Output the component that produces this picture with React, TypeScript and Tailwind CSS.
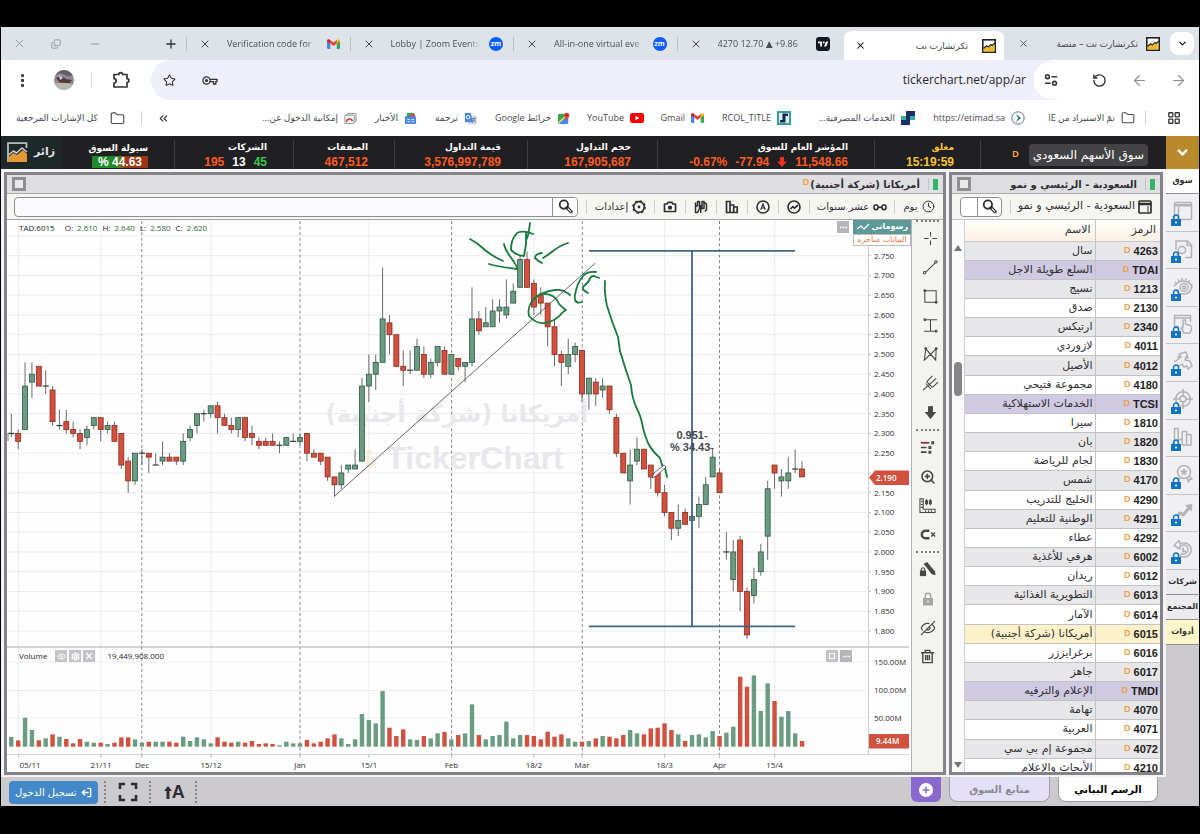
import React from 'react';
import {
  X, Minus, Copy, Plus, ChevronDown, ChevronsLeft, EllipsisVertical, Star, ArrowLeft, ArrowRight,
  RotateCcw, Folder, LayoutGrid, Settings, Clock, EyeOff, ZoomIn, Ellipsis, ArrowDown, LogOut, Eye,
} from 'lucide-react';

type Kids = { children?: React.ReactNode };

/* ---------- market data: open, high, low, close (in halalas) and volume (in 0.59M units) ---------- */

const SERIES: number[][] = [
  [230, 235, 229, 230, 29], [230, 231, 226, 228, 19], [231, 248, 231, 242, 87], [243, 248, 239, 245, 50],
  [247, 247, 242, 242, 19], [242, 246, 240, 242, 25], [241, 242, 232, 233, 37], [232, 236, 231, 232, 30],
  [233, 236, 230, 231, 23], [231, 233, 229, 230, 10], [230, 231, 226, 228, 23], [229, 232, 227, 231, 15],
  [232, 234, 231, 234, 12], [234, 234, 228, 231, 12], [231, 233, 230, 232, 8], [232, 233, 228, 228, 12],
  [230, 230, 221, 222, 28], [223, 224, 215, 218, 28], [218, 225, 217, 225, 22], [225, 226, 222, 225, 12],
  [225, 225, 220, 224, 15], [222, 225, 222, 222, 15], [223, 228, 222, 224, 15], [224, 225, 223, 223, 15],
  [224, 224, 222, 223, 12], [223, 230, 222, 228, 30], [229, 232, 228, 231, 17], [232, 235, 230, 235, 28],
  [235, 236, 233, 235, 22], [235, 237, 234, 237, 10], [237, 238, 230, 234, 28], [234, 235, 232, 232, 15],
  [232, 234, 230, 231, 12], [231, 234, 229, 234, 15], [234, 234, 228, 229, 12], [230, 232, 227, 229, 17],
  [228, 229, 226, 227, 8], [228, 229, 227, 227, 10], [228, 230, 227, 227, 8], [227, 228, 225, 227, 4],
  [227, 229, 227, 229, 15], [228, 230, 228, 228, 10], [228, 230, 227, 229, 10], [230, 230, 223, 225, 20],
  [225, 226, 224, 224, 10], [225, 225, 222, 223, 15], [224, 224, 218, 219, 25], [219, 219, 214, 217, 37],
  [217, 222, 216, 220, 25], [221, 222, 220, 222, 8], [221, 226, 221, 222, 22], [223, 244, 223, 242, 98],
  [242, 250, 238, 245, 80], [245, 250, 241, 248, 70], [248, 272, 248, 259, 167], [258, 260, 250, 255, 57],
  [255, 255, 247, 247, 32], [247, 251, 242, 246, 52], [246, 251, 245, 246, 22], [246, 254, 246, 252, 20],
  [250, 252, 244, 245, 32], [245, 249, 244, 248, 25], [248, 252, 247, 252, 40], [251, 252, 245, 245, 44],
  [245, 250, 245, 250, 22], [249, 249, 246, 247, 35], [247, 248, 243, 248, 40], [248, 267, 247, 259, 127],
  [259, 261, 255, 256, 35], [257, 262, 257, 258, 22], [257, 264, 257, 261, 32], [261, 264, 258, 262, 35],
  [260, 269, 259, 262, 75], [263, 268, 263, 266, 25], [267, 275, 267, 274, 35], [274, 276, 267, 267, 35],
  [268, 269, 260, 262, 32], [265, 267, 260, 263, 22], [263, 263, 252, 257, 45], [257, 259, 247, 250, 30],
  [250, 251, 242, 248, 37], [247, 254, 245, 250, 25], [250, 253, 248, 252, 15], [251, 251, 238, 240, 15],
  [240, 244, 236, 244, 17], [243, 244, 237, 240, 25], [241, 244, 239, 242, 32], [242, 242, 235, 236, 30],
  [234, 235, 224, 225, 25], [225, 225, 220, 220, 35], [218, 226, 212, 222, 50], [223, 229, 222, 226, 40],
  [226, 226, 221, 221, 37], [222, 222, 216, 219, 55], [220, 220, 214, 215, 57], [215, 217, 209, 210, 70],
  [210, 210, 203, 206, 50], [206, 212, 204, 208, 37], [210, 211, 207, 207, 17], [208, 209, 208, 209, 35],
  [209, 214, 206, 212, 37], [212, 219, 212, 217, 28], [219, 226, 219, 224, 47], [220, 221, 215, 215, 32],
  [200, 205, 198, 200, 42], [193, 203, 190, 200, 60], [203, 204, 185, 190, 210], [190, 191, 178, 179, 180],
  [189, 196, 187, 193, 214], [195, 202, 194, 200, 107], [204, 218, 198, 216, 190], [222, 222, 216, 220, 137],
  [218, 221, 214, 219, 90], [218, 224, 216, 220, 107], [221, 226, 220, 221, 40], [221, 223, 219, 219, 17],
];

const X0 = 11.3;
const STEP = 6.876;
const priceY = (p: number) => 255.7 + (275 - p) * 3.95;

const SOLID = [18.7, 101, 211, 369, 534, 664.7, 774.7];
const DASHED = [141.8, 300, 451.6, 582.3, 719.5];
const DATES: [number, string][] = [
  [30, '05/11'], [101, '21/11'], [142, 'Dec'], [211, '15/12'], [300, 'Jan'], [369, '15/1'], [451.5, 'Feb'],
  [534, '18/2'], [582, 'Mar'], [664.5, '18/3'], [719.5, 'Apr'], [774.5, '15/4'],
];
const PRICES = Array.from({ length: 20 }, (_, i) => 275 - i * 5);

const STROKES = [
  'M470 239 Q478 243 485 250 Q492 256 503 261',
  'M489 264 Q500 267 517 269 Q518 268 512 259 Q505 250 504 244',
  'M533 234 C527 231 520 231 517 233 C512 239 511 243 511 250 C515 254 519 256 524 256 L526 244 L526 233 M526 240 C529 236 529 229 530 223',
  'M568 243 Q561 245 553 251 Q548 255 543 258 M542 253 Q535 254 535 258 Q538 261 542 263',
  'M570 295 Q563 289 555 290 Q540 292 533 300 Q527 307 529 316 Q536 324 545 323 Q556 321 563 312 L566 310 Q559 305 558 302 Q554 293 541 294',
  'M596 272 Q588 271 584 275 Q578 282 577 287 Q574 296 575 300 Q577 304 582 302',
  'M599 278 L594 276 Q590 276 589 281 L583 287 Q582 290 588 293',
  'M605 281 Q604 292 607 306 Q612 322 618 337 L620 351 Q625 368 631 385 Q632 399 637 409 Q641 416 643 428 Q645 436 648 443 Q652 451 660 458 L662 465 L665 468 L667 477',
];

function PriceChart() {
  return (
    <svg viewBox="7 220 904 552" preserveAspectRatio="xMinYMin meet" className="block h-full w-full" role="img" aria-label="TAD.6015">
      <rect x="7" y="220" width="904" height="552" fill="#fefefe" />
      <g stroke="#ebebee" strokeWidth="1">
        {[280, ...PRICES].map((p) => <line key={p} x1="7" x2="867" y1={priceY(p)} y2={priceY(p)} />)}
        {[662, 690.5, 718].map((y) => <line key={y} x1="7" x2="867" y1={y} y2={y} />)}
        {SOLID.map((x) => <line key={x} x1={x} x2={x} y1="220" y2="757" />)}
      </g>
      <g stroke="#85838a" strokeWidth="1" strokeDasharray="3 2.6">
        {DASHED.map((x) => <line key={x} x1={x} x2={x} y1="221" y2="757" />)}
      </g>
      <g fill="#e9e7ec" fontWeight="700" textAnchor="middle">
        <text x="457" y="422" fontSize="24" direction="rtl" fontFamily="'DejaVu Sans', sans-serif">أمريكانا (شركة أجنبية)</text>
        <text x="475" y="469" fontSize="32" fontFamily="'Liberation Sans', sans-serif">TickerChart</text>
      </g>
      <path d="M368 466 V452 H373 M368 468 L376 461" fill="none" stroke="#f6e9da" strokeWidth="3" />
      <line x1="8" x2="8" y1="433" y2="441" stroke="#777" />
      {SERIES.map(([o, h, l, c, v], i) => {
        const x = X0 + i * STEP;
        const up = c >= o;
        const fill = up ? '#699c80' : '#d2503e';
        return (
          <g key={i}>
            <line x1={x} x2={x} y1={priceY(h)} y2={priceY(l)} stroke="#6b6b6e" strokeWidth="1" />
            {o === c
              ? <line x1={x - 3} x2={x + 3} y1={priceY(o)} y2={priceY(o)} stroke="#2d3b35" strokeWidth="1.2" />
              : <rect x={x - 2.5} y={priceY(Math.max(o, c))} width="5" height={Math.abs(o - c) * 3.95} fill={fill} stroke={up ? '#2f5743' : '#8a2a1e'} strokeWidth="0.8" />}
            <rect x={x - 2.2} y={746.7 - v / 3} width="4.4" height={v / 3} fill={fill} />
          </g>
        );
      })}
      <line x1="334.3" y1="496.3" x2="595.3" y2="263" stroke="#555" strokeWidth="0.9" />
      <g stroke="#40658c" strokeWidth="1.8">
        <path d="M589 250.8 H795 M589 626.3 H795 M692 251 V626" />
      </g>
      <g fontFamily="'Liberation Sans', sans-serif" fontWeight="700" fontSize="11" fill="#48464c" textAnchor="middle">
        <text x="692" y="439">0.951-</text>
        <text x="692" y="451">% 34.43-</text>
      </g>
      <g fill="none" stroke="#187a3c" strokeWidth="1.8" strokeLinecap="round" strokeLinejoin="round">
        {STROKES.map((d) => <path key={d} d={d} />)}
      </g>
      <path d="M652 478 L654 473 L664 465 L666 467 L656 476 Z" fill="#fff" stroke="#444" strokeWidth="0.8" />
      <g stroke="#c3c1c6" strokeWidth="1">
        <line x1="7" x2="909" y1="647" y2="647" stroke="#a7a6aa" strokeWidth="1.2" />
        <line x1="7" x2="909" y1="754.5" y2="754.5" stroke="#d5d3d8" />
        <line x1="868.5" x2="868.5" y1="220" y2="754" stroke="#cfcbd3" />
        {PRICES.map((p) => <line key={p} x1="868" x2="871" y1={priceY(p)} y2={priceY(p)} />)}
        {[...SOLID, ...DASHED].map((x) => <line key={x} x1={x} x2={x} y1="754" y2="758" />)}
      </g>
      <g fontFamily="'Open Sans', sans-serif" fontSize="8" fill="#2f2d33">
        {PRICES.filter((p) => p !== 220).map((p) => <text key={p} x="874" y={priceY(p) + 3}>{(p / 100).toFixed(3)}</text>)}
        <text x="874" y="664.5">150.00M</text>
        <text x="874" y="693">100.00M</text>
        <text x="874" y="720.5">50.00M</text>
        <g textAnchor="middle">{DATES.map(([x, d]) => <text key={d} x={x} y="767.5">{d}</text>)}</g>
      </g>
      <path d="M869 477.5 L875 470.5 H909 V485 H875 Z" fill="#d2513e" />
      <rect x="869" y="734" width="40" height="14.5" fill="#d2513e" />
      <g fontFamily="'Open Sans', sans-serif" fontSize="8" fontWeight="600" fill="#fff">
        <text x="876" y="480.5">2.190</text>
        <text x="876" y="744">9.44M</text>
      </g>
    </svg>
  );
}

/* ---------- brand marks ---------- */

const Gmail = () => (
  <svg viewBox="0 0 24 18" className="h-[10px] w-[13px] shrink-0"><path d="M0 3v13a2 2 0 0 0 2 2h4V8z" fill="#4285f4" /><path d="M24 3v13a2 2 0 0 1-2 2h-4V8z" fill="#34a853" /><path d="M18 1.500v6.500l6-4.500V3c0-3-3-3.500-4.500-2.300z" fill="#fbbc04" /><path d="M6 8V1.600l6 4.500 6-4.500V8l-6 4.500z" fill="#ea4335" /><path d="M0 3v1l6 4.500V1.600L4.500.7C3-.5 0 0 0 3z" fill="#c5221f" /></svg>
);
const ZoomMark = () => <span className="flex size-[14px] shrink-0 items-center justify-center rounded-full bg-[#0b5cff] font-['Open_Sans',sans-serif] text-[7px] leading-none font-bold text-white">zm</span>;
const TvMark = () => (
  <svg viewBox="0 0 14 14" className="size-[14px] shrink-0"><rect width="14" height="14" rx="3" fill="#131722" /><path d="M2 4.500h4v5H4.200V6.300H2zM10 4.500h2.300l-2 5H8z" fill="#fff" /><circle cx="7.700" cy="5.400" r="1" fill="#fff" /></svg>
);
const TcMark = () => (
  <svg viewBox="0 0 14 14" className="size-[14px] shrink-0"><rect x=".8" y=".8" width="12.400" height="12.400" fill="#fff" stroke="#222" strokeWidth="1.600" /><path d="M1.500 12.500V10l3-2.500 1.800 1.500L9 6.500l1.500 1 2-2v7z" fill="#f5b923" /><path d="M1.500 9.500l3-2.700L6.300 8 9 5.500l1.200 1L13 4" fill="none" stroke="#222" strokeWidth="1.200" /></svg>
);
const YouTube = () => <svg viewBox="0 0 14 10" className="h-[10px] w-[14px] shrink-0"><rect width="14" height="10" rx="2.500" fill="#f00" /><path d="M5.500 2.800v4.400L9.400 5z" fill="#fff" /></svg>;
const Maps = () => <svg viewBox="0 0 14 14" className="size-[13px] shrink-0"><rect x="1" y="2" width="11" height="11" rx="1.500" fill="#34a853" /><path d="M1 13L12 3v8a2 2 0 0 1-2 2z" fill="#4285f4" /><path d="M2 13L12 3l-1-1L1 11z" fill="#fbd75b" /><path d="M10.500 9C9 6.500 7.700 5.500 7.700 3.500a2.800 2.800 0 0 1 5.600 0c0 2-1.300 3-2.800 5.500z" fill="#ea4335" /><circle cx="10.500" cy="3.400" r="1" fill="#811" /></svg>;
const Translate = () => <svg viewBox="0 0 14 14" className="size-[13px] shrink-0"><rect x="5" y="4" width="8.500" height="9.500" rx="1" fill="#cfd3da" /><path d="M1 1h6l3 10H1z" fill="#4a86e8" /><circle cx="4.500" cy="5.500" r="1.900" fill="none" stroke="#fff" /><path d="M9 7h4M11 6v1q0 3-2 4M10 8l3 3" stroke="#667" strokeWidth=".8" fill="none" /></svg>;
const News = () => <svg viewBox="0 0 14 14" className="size-[13px] shrink-0"><path d="M3 1h8v5H3z" fill="#34a853" /><path d="M7 2l5 1v4H6z" fill="#ea4335" /><rect x="1" y="4.500" width="12" height="8.500" rx="1" fill="#4a86e8" /><path d="M3.500 8h3M3.500 10.500h3M8 8h3M8 10.500h3" stroke="#fff" strokeWidth=".9" /></svg>;
const Remote = () => <svg viewBox="0 0 14 14" className="size-[13px] shrink-0"><rect x="3" y="1.500" width="10" height="9" rx="1" fill="#eee" stroke="#888" /><rect x="1" y="3.500" width="10" height="9" rx="1" fill="#fafafa" stroke="#888" /><path d="M3 11a3 3 0 0 1 6-1" fill="none" stroke="#d33" strokeWidth="1.600" /></svg>;
const Rcol = () => <svg viewBox="0 0 14 14" className="size-[14px] shrink-0"><rect width="14" height="14" fill="#35a097" /><path d="M2 2h10v10H2z" fill="#d9efeb" /><path d="M5.500 2.500H11V5H8.500v6.500H3V9h2.500z" fill="#18205e" /></svg>;
const Bank = () => <svg viewBox="0 0 14 14" className="size-[14px] shrink-0"><path d="M5 0h9v5H9v9H0V9h5z" fill="#1c2c6d" /><path d="M0 5h5v4H0zM9 5h5v4H9z" fill="#35b09f" /></svg>;
const Etimad = () => <svg viewBox="0 0 14 14" className="size-[14px] shrink-0"><circle cx="7" cy="7" r="6.200" fill="#fff" stroke="#566" strokeWidth=".9" /><path d="M5 3l5 4-5 4 2-4z" fill="#1d7f78" /></svg>;

const Loupe = () => (
  <svg viewBox="0 0 14 14" className="size-[15px]" fill="none" stroke="currentColor"><circle cx="5.500" cy="5.200" r="3.900" strokeWidth="1.700" /><path d="M8.500 8.200l3.600 3.600" strokeWidth="3.200" strokeLinecap="round" /><path d="M9.500 9.200l2.400 2.400" stroke="#fff" strokeWidth="1" strokeLinecap="round" /></svg>
);

/* ---------- browser chrome ---------- */

function Tab({ title, icon }: { title: string; icon: React.ReactNode }) {
  return (
    <div className="flex h-full min-w-0 flex-1 items-center">
      <span className="h-3.5 w-px bg-[#b9bfc8]" />
      <button aria-label="إغلاق" className="ml-3 shrink-0 text-[#333]"><X size={12} strokeWidth={1.8} /></button>
      <button dir="ltr" className="ml-4 flex-1 overflow-hidden mask-r-from-85% text-left whitespace-nowrap text-[#4b4e55]">{title}</button>
      <span className="mr-[10px] ml-2">{icon}</span>
    </div>
  );
}

function Bookmark({ icon, children, className }: Kids & { icon: React.ReactNode; className: string }) {
  return (
    <a href="#bookmark" className={`flex shrink-0 items-center justify-end gap-1.5 whitespace-nowrap ${className}`}>
      <span dir="auto">{children}</span>
      {icon}
    </a>
  );
}

function BrowserChrome() {
  return (
    <header className="font-['Open_Sans','DejaVu_Sans',sans-serif] text-[9px] text-[#45484f]">
      <div className="flex h-[33px] items-center bg-[#dee3ea]">
        <div className="flex w-[185px] shrink-0 items-center text-[#8d9096]">
          <button aria-label="إغلاق النافذة" className="ml-3 w-[38px]"><X size={13} strokeWidth={1.6} /></button>
          <button aria-label="استعادة" className="w-[38px]"><Copy size={10} strokeWidth={2} className="-scale-y-100" /></button>
          <button aria-label="تصغير" className="w-[75px]"><Minus size={12} strokeWidth={1.8} /></button>
          <button aria-label="علامة تبويب جديدة" className="text-[#333]"><Plus size={14} strokeWidth={2.200} /></button>
        </div>
        <div className="mr-1 flex h-full min-w-0 flex-1">
          <Tab title="Verification code for" icon={<Gmail />} />
          <Tab title="Lobby | Zoom Events" icon={<ZoomMark />} />
          <Tab title="All-in-one virtual eve" icon={<ZoomMark />} />
          <Tab title="4270 12.70 ▲ +9.86" icon={<TvMark />} />
        </div>
        <div className="mt-1 flex h-[29px] w-[160px] shrink-0 items-center rounded-t-lg bg-white pr-2 pl-[11px]">
          <button aria-label="إغلاق" className="text-black"><X size={11} strokeWidth={2.200} /></button>
          <button dir="rtl" className="mx-3.5 flex-1 text-start whitespace-nowrap">تكرتشارت نت</button>
          <TcMark />
        </div>
        <div className="flex w-[166px] shrink-0 items-center pr-[10px] pl-[14px]">
          <button aria-label="إغلاق"><X size={11} strokeWidth={1.800} /></button>
          <button dir="rtl" className="mx-2 flex-1 overflow-hidden text-start whitespace-nowrap">تكرتشارت نت – منصة</button>
          <TcMark />
        </div>
        <button aria-label="البحث في علامات التبويب" className="mr-[5px] flex h-[23px] w-6 shrink-0 items-center justify-center rounded-lg bg-white text-black"><ChevronDown size={11} strokeWidth={2.400} /></button>
      </div>

      <div className="flex h-10 items-center bg-white text-[#333]">
        <button aria-label="القائمة" className="ml-[13px]"><EllipsisVertical size={17} strokeWidth={2.600} /></button>
        <svg viewBox="0 0 20 20" className="ml-[23px] size-5"><defs><clipPath id="avatar"><circle cx="10" cy="10" r="10" /></clipPath></defs><g clipPath="url(#avatar)"><rect width="20" height="20" fill="#8e8c96" /><path d="M0 5Q6 2 11 5T20 4V0H0z" fill="#6a5c6b" /><path d="M2 8Q8 5 12 9L18 10 16 13 6 13z" fill="#583640" /><path d="M0 14Q10 11 20 15V20H0z" fill="#b9b7ab" /><path d="M5 5l4 3-3 2z" fill="#d9d4da" /></g></svg>
        <span className="ml-[17px] h-3.5 w-px bg-[#c9cfee]" />
        <button aria-label="الإضافات" className="ml-5">
          <svg viewBox="0 0 18 18" className="size-[18px]" fill="none" stroke="currentColor" strokeWidth="1.700" strokeLinejoin="round"><path d="M2 3.500h4.800a1.900 1.900 0 0 1 3.800 0H15v4.200a1.900 1.900 0 0 1 0 3.800V16H2v-4a2.200 2.200 0 0 0 0-4.400z" /></svg>
        </button>
        <div className="ml-[21px] flex h-10 min-w-0 flex-1 items-center rounded-full bg-[#efeffb] pl-3">
          <button aria-label="إضافة إشارة"><Star size={13} strokeWidth={1.900} /></button>
          <button aria-label="كلمات المرور" className="ml-[26px]">
            <svg viewBox="0 0 16 9" className="h-[9px] w-4" fill="none" stroke="currentColor" strokeWidth="1.300"><circle cx="4.500" cy="4.500" r="3.600" /><circle cx="4.500" cy="4.500" r=".9" fill="currentColor" /><path d="M8 3.300h7v2.400h-1.200V8h-2.300V5.700H8" /></svg>
          </button>
          <input aria-label="العنوان" defaultValue="tickerchart.net/app/ar" className="ml-3 min-w-0 flex-1 bg-transparent text-right text-[12px] text-[#26262e] outline-none" />
          <button aria-label="معلومات الموقع" className="ml-2 flex h-9 w-[34px] shrink-0 items-center justify-center rounded-2xl bg-white">
            <svg viewBox="0 0 14 14" className="size-3.5" fill="none" stroke="currentColor" strokeWidth="1.600"><circle cx="3.500" cy="3.700" r="1.900" /><path d="M7.500 3.700H13M1 10.300h5.500" /><circle cx="10.500" cy="10.300" r="1.900" /></svg>
          </button>
        </div>
        <button aria-label="إعادة التحميل" className="ml-6"><RotateCcw size={15} strokeWidth={2.200} /></button>
        <button aria-label="رجوع" className="ml-6 text-[#8d8f94]"><ArrowLeft size={17} strokeWidth={1.700} /></button>
        <button aria-label="تقدم" className="mr-3 ml-[22px] text-[#8d8f94]"><ArrowRight size={17} strokeWidth={1.700} /></button>
      </div>

      <nav className="flex h-[36px] items-center bg-white">
        <div className="flex w-[168px] shrink-0 items-center pl-[15px]">
          <a href="#bookmark" className="flex items-center gap-3 whitespace-nowrap"><span dir="rtl">كل الإشارات المرجعية</span><Folder size={15} strokeWidth={1.800} /></a>
          <span className="ml-4 h-3.5 w-px bg-[#c9cfee]" />
        </div>
        <button aria-label="المزيد" className="-ml-3 text-[#333]"><ChevronsLeft size={13} /></button>
        <div className="flex flex-1 justify-end">
          <Bookmark className="w-[110px]" icon={<Remote />}>إمكانية الدخول عن...</Bookmark>
          <Bookmark className="w-[60px]" icon={<News />}>الأخبار</Bookmark>
          <Bookmark className="w-[60px]" icon={<Translate />}>ترجمة</Bookmark>
          <Bookmark className="w-[93px]" icon={<Maps />}>خرائط Google</Bookmark>
          <Bookmark className="w-[74px]" icon={<YouTube />}>YouTube</Bookmark>
          <Bookmark className="w-[60px]" icon={<Gmail />}>Gmail</Bookmark>
          <Bookmark className="w-[87px]" icon={<Rcol />}>RCOL_TITLE</Bookmark>
          <Bookmark className="w-[124px]" icon={<Bank />}>الخدمات المصرفية...</Bookmark>
          <Bookmark className="w-[110px]" icon={<Etimad />}>https://etimad.sa</Bookmark>
          <Bookmark className="w-[110px]" icon={<Folder size={14} strokeWidth={1.800} />}>تمّ الاستيراد من IE</Bookmark>
        </div>
        <span className="ml-2.5 h-3.5 w-px bg-[#c9cfee]" />
        <button aria-label="التطبيقات" className="mr-[18px] ml-[21px] text-[#333]"><LayoutGrid size={14} strokeWidth={2.200} /></button>
      </nav>
    </header>
  );
}

/* ---------- market strip ---------- */

function Stat({ label, children, gold = false }: Kids & { label: string; gold?: boolean }) {
  return (
    <div className="flex flex-col items-end justify-center py-1 pr-[1px] whitespace-nowrap">
      <div className="flex h-full w-full flex-col items-end justify-center gap-px border-r border-[#3f3f42] pr-[26px]">
        <span dir="rtl" className={`font-['DejaVu_Sans',sans-serif] text-[9px] leading-[14px] font-bold ${gold ? 'text-[#fbc32d]' : 'text-white'}`}>{label}</span>
        <span className={`flex items-center gap-2 font-['Liberation_Sans',sans-serif] text-[12px] leading-[14px] font-bold ${gold ? 'text-[#fbc32d]' : 'text-[#ff5a1f]'}`}>{children}</span>
      </div>
    </div>
  );
}

function MarketStrip() {
  return (
    <section className="flex h-[33px] bg-[#202022]">
      <a href="#account" className="flex w-[61px] shrink-0 items-center gap-1.5 bg-[#1e2829] pl-1.5 font-['DejaVu_Sans',sans-serif] text-[11px] font-bold text-[#e4e4e6]">
        <svg viewBox="0 0 21 21" className="size-[21px]"><path d="M1 20V1.200h18.500V6" fill="none" stroke="#b8bcbf" strokeWidth="1.800" /><path d="M1.500 20v-5l5-4 3.500 2 6-5 4 4v8z" fill="#e39a35" /><path d="M1.500 13l5-4 3 2L15 6l5 4" fill="none" stroke="#c9cccf" strokeWidth="1.600" /></svg>
        <span dir="rtl">زائر</span>
      </a>
      <div className="grid min-w-0 flex-1 grid-cols-[114fr_119fr_101fr_133fr_130fr_217fr_106fr_184fr]">
        <Stat label="سيولة السوق"><span className="bg-linear-to-r from-[#1f8a2a] from-45% to-[#9c3510] to-60% px-1.5 leading-[12px] text-white">% 44.63</span></Stat>
        <Stat label="الشركات"><span>195</span><span className="text-white">13</span><span className="text-[#35c84a]">45</span></Stat>
        <Stat label="الصفقات">467,512</Stat>
        <Stat label="قيمة التداول">3,576,997,789</Stat>
        <Stat label="حجم التداول">167,905,687</Stat>
        <Stat label="المؤشر العام للسوق"><span>-0.67%</span><span>-77.94</span><svg viewBox="0 0 10 10" className="size-[10px]"><path d="M3 0h4v4.500h3L5 10 0 4.500h3z" fill="#f02f1d" /></svg><span>11,548.66</span></Stat>
        <Stat label="مغلق" gold>15:19:59</Stat>
        <div className="flex items-center justify-end gap-2.5 pr-[18px]">
          <span className="font-['Liberation_Sans',sans-serif] text-[9px] font-bold text-[#f2a33c]">D</span>
          <button dir="rtl" className="h-[22px] rounded bg-[#434345] px-1 font-['DejaVu_Sans',sans-serif] text-[12px] whitespace-nowrap text-white">سوق الأسهم السعودي</button>
        </div>
      </div>
      <button aria-label="اختيار السوق" className="flex w-[33px] shrink-0 items-center justify-center bg-[#b98a2c] text-white"><ChevronDown size={15} strokeWidth={4} /></button>
    </section>
  );
}

/* ---------- panels ---------- */

function Panel({ title, children, badge, className }: Kids & { title: string; badge?: boolean; className: string }) {
  return (
    <section className={`flex min-h-0 flex-col border-3 border-[#858387] bg-white ${className}`}>
      <div className="flex h-[19px] shrink-0 items-center border-b border-[#aaa8ac] bg-[#dfdee1] px-[5px]">
        <button aria-label="تكبير" className="size-3.5 border-[3px] border-[#8f8e92] bg-[#e9e9ea]" />
        {badge && <span className="ml-auto pb-0.5 font-['Liberation_Sans',sans-serif] text-[9px] font-bold text-[#f2a33c]">D</span>}
        <h2 dir="rtl" className={`pr-2 font-['DejaVu_Sans',sans-serif] text-[10px] font-bold whitespace-nowrap text-[#2f2e33] ${badge ? 'ml-px' : 'ml-auto'}`}>{title}</h2>
        <span className="h-3 w-px bg-[#c5c4c7]" />
        <span className="ml-1 h-[11px] w-[5px] bg-[#35b46c]" />
      </div>
      {children}
    </section>
  );
}

const Sep = () => <span className="h-3.5 w-px shrink-0 bg-[#cfcfcf]" />;

function ToolButton({ label, children }: Kids & { label: string }) {
  return <button aria-label={label} className="flex w-[30px] shrink-0 items-center justify-center">{children}</button>;
}

function ChartToolbar() {
  return (
    <div className="flex h-[26px] shrink-0 items-center border-b border-[#a3a2a6] bg-[#f5f6f2] pl-[7px] font-['DejaVu_Sans',sans-serif] text-[10px] whitespace-nowrap text-[#2f2e33]">
      <form className="flex h-5 min-w-0 flex-1 overflow-hidden rounded border border-[#8f8e92] bg-[#faf9fb]">
        <input aria-label="بحث" className="min-w-0 flex-1 bg-transparent px-2 outline-none" />
        <button type="button" aria-label="ابحث" className="flex w-[25px] items-center justify-center border-l border-[#8f8e92] bg-white"><Loupe /></button>
      </form>
      <span className="w-2" />
      <Sep />
      <button className="flex w-[67px] items-center justify-center gap-1">
        <span>إعدادات</span>
        <svg viewBox="0 0 14 14" className="size-3.5" fill="none" stroke="currentColor"><circle cx="7" cy="7" r="5.300" strokeWidth="1.700" /><circle cx="7" cy="7" r="6.200" strokeWidth="1.300" strokeDasharray="2.400 2.460" /><circle cx="7" cy="7" r="1.400" fill="currentColor" stroke="none" /></svg>
      </button>
      <Sep />
      <ToolButton label="صورة">
        <svg viewBox="0 0 14 12" className="h-3 w-3.5"><path d="M1.500 3h2.700l1-1.700h3.600l1 1.700h2.700v7.500h-11z" fill="#fff" stroke="currentColor" strokeWidth="1.700" strokeLinejoin="round" /><circle cx="7" cy="6.600" r="2.200" fill="currentColor" /></svg>
      </ToolButton>
      <Sep />
      <ToolButton label="نوع الرسم">
        <svg viewBox="0 0 14 14" className="size-3.5" fill="none" stroke="currentColor" strokeWidth="1.500" strokeLinejoin="round"><path d="M1.500 2.500v3M1.500 11v2M3.500 1.500h2v7l-2 4h-2V6h2zM8 1.500h2v7H8zM11 2.500l1.500 2v5l-1.500 2M6.700 5v8" /></svg>
      </ToolButton>
      <Sep />
      <ToolButton label="مؤشرات">
        <svg viewBox="0 0 14 14" className="size-3.5" fill="none" stroke="currentColor" strokeWidth="1.700"><path d="M1.500 1.500h3.500v11H1.500zM5 5h3.700v7.500H5zM8.700 7h3.500v5.500H8.700z" /></svg>
      </ToolButton>
      <Sep />
      <ToolButton label="نص">
        <svg viewBox="0 0 14 14" className="size-3.5" fill="none" stroke="currentColor" strokeWidth="1.600"><circle cx="7" cy="7" r="6" /><path d="M4.800 9.700L7 4l2.200 5.700M5.500 8h3" strokeWidth="1.200" /></svg>
      </ToolButton>
      <Sep />
      <ToolButton label="اتجاه">
        <svg viewBox="0 0 14 14" className="size-3.5" fill="none" stroke="currentColor" strokeWidth="1.700"><circle cx="7" cy="7" r="6" /><path d="M3.500 9l2.300-2.300 1.700 1.500L11 5" /></svg>
      </ToolButton>
      <Sep />
      <button className="flex w-[84px] items-center justify-center gap-1">
        <span dir="rtl">عشر سنوات</span>
        <svg viewBox="0 0 14 8" className="h-2 w-3.5" fill="none" stroke="currentColor" strokeWidth="1.600"><rect x="1" y="2" width="4" height="4.600" rx="1.600" /><rect x="9" y="2" width="4" height="4.600" rx="1.600" /><path d="M5 4.300h4" /></svg>
      </button>
      <Sep />
      <button className="flex w-12 items-center justify-center gap-1"><span>يوم</span><Clock size={13} strokeWidth={1.800} /></button>
    </div>
  );
}

const Small = ({ d, fill = 'none' }: { d: string; fill?: string }) => (
  <svg viewBox="0 0 18 18" className="size-[17px]" fill={fill} stroke="currentColor" strokeWidth="1.100"><path d={d} /></svg>
);
const Dots = () => <span className="my-0.5 w-[23px] border-t-2 border-dotted border-[#7d7d7d] first:mt-0" />;

const TOOLS_A: [string, React.ReactNode][] = [
  ['مؤشر التقاطع', <Small d="M9 2v5M9 11v5M2 9h5M11 9h5" />],
  ['خط', <Small d="M3.500 14.500L14 4M4 14a1.300 1.300 0 1 0-2 1.500a1.300 1.300 0 0 0 2-1.500M16 2.600a1.300 1.300 0 1 0-2 1.500a1.300 1.300 0 0 0 2-1.500" />],
  ['مستطيل', <Small d="M3 3h12v12H3zM2 3a1 1 0 1 0 2 0a1 1 0 1 0-2 0M14 15a1 1 0 1 0 2 0a1 1 0 1 0-2 0" />],
  ['قياس', <Small d="M4 3h12M2 15h12M9 3v12M2 3a1 1 0 1 0 2 0a1 1 0 1 0-2 0M14 15a1 1 0 1 0 2 0a1 1 0 1 0-2 0" />],
  ['نموذج', <Small d="M2.500 15L4 3l10.500 12L15 3zM9 8.700L2.500 15M9 8.700L15 15M3 3a1 1 0 1 0 2 0a1 1 0 1 0-2 0M14 3a1 1 0 1 0 2 0a1 1 0 1 0-2 0" />],
  ['شوكة', <Small d="M1 16L8 10M5 7l6-6M8 10l7-6.500M11 13l6-5.500M5 7l6 6M4 9l5.500 6" />],
  ['سهم', <Small fill="currentColor" d="M7 3h4v6h3l-5 6-5-6h3z" />],
];
const TOOLS_B: [string, React.ReactNode][] = [
  ['قائمة', <svg viewBox="0 0 18 18" className="size-[17px]" stroke="currentColor" strokeWidth="1.800"><path d="M2 4h9" stroke="#8b2942" /><path d="M2 9h6M2 14h6" /><path d="M13 4h3M10 9h3M10 14h3" strokeWidth="3" /></svg>],
  ['تكبير الرسم', <ZoomIn size={16} strokeWidth={2.400} />],
  ['مسطرة', <Small d="M1 2h3.500v11H17v3.500H1zM2 5h2M2 8h2M2 11h2M7 14v2M10 14v2M13 14v2M8 2v7M12 2v7M7 4h2v3H7zM11 4h2v3h-2z" />],
  ['مغناطيس', <svg viewBox="0 0 18 18" className="size-[17px]" fill="none" stroke="currentColor"><path d="M11 5H7a4 4 0 0 0 0 8h4" strokeWidth="2.600" /><path d="M13 7l4 4M17 7l-4 4" strokeWidth="1.500" /></svg>],
];
const TOOLS_C: [string, React.ReactNode][] = [
  ['قفل الرسم', <svg viewBox="0 0 18 18" className="size-[17px]" fill="currentColor"><path d="M5 3l3.500-2L17 11l.5 4-4-1z" /><path d="M1 10h6.500v6H1z" /><path d="M2.500 10V8.500a1.800 1.800 0 0 1 3.500 0V10" fill="none" stroke="currentColor" strokeWidth="1.200" /></svg>],
  ['قفل', <svg viewBox="0 0 12 14" className="h-3.5 w-3 text-[#a5a5a5]"><path d="M3.300 6.500V4a2.700 2.700 0 0 1 5.400 0v2.500" fill="none" stroke="currentColor" strokeWidth="1.500" /><rect x="1" y="6" width="10" height="7.500" fill="currentColor" /><circle cx="6" cy="9.500" r="1" fill="#f3f4ef" /></svg>],
  ['إخفاء', <EyeOff size={16} strokeWidth={1.800} className="-scale-x-100" />],
  ['حذف', <svg viewBox="0 0 16 16" className="size-[15px]" fill="none" stroke="currentColor" strokeWidth="1.500"><path d="M1 4h14M5.500 3.500V1.500h5v2M3 4v10.500h10V4M6 6.500v5.500M8 6.500v5.500M10 6.500v5.500" /></svg>],
];

const toolItem = ([label, icon]: [string, React.ReactNode]) => (
  <button key={label} aria-label={label} className="flex h-[29px] items-center justify-center">{icon}</button>
);

function ChartPanel() {
  return (
    <Panel title="أمريكانا (شركة أجنبية)" badge className="min-w-0 flex-1">
      <ChartToolbar />
      <div className="flex min-h-0 flex-1">
        <div className="relative min-w-0 flex-1">
          <PriceChart />
          <div className="absolute top-0.5 left-3 flex gap-2 font-['Open_Sans',sans-serif] text-[8px] text-[#26262a]">
            <span className="mr-0.5">TAD.6015</span>
            {[['O', '2.610'], ['H', '2.640'], ['L', '2.580'], ['C', '2.620']].map(([k, v]) => (
              <span key={k} className="-mr-[3px]">{k}:<span className="ml-1 text-[#2e6b38]">{v}</span></span>
            ))}
          </div>
          <div className="absolute top-0 right-0 flex items-start gap-1">
            <button aria-label="خيارات" className="mt-px flex size-3 items-center justify-center bg-[#b5b4b9] text-white"><Ellipsis size={9} strokeWidth={3} /></button>
            <div dir="rtl" className="w-[58px] font-['DejaVu_Sans',sans-serif] text-[8px] whitespace-nowrap">
              <button className="flex h-[14px] w-full items-center justify-between bg-[#5b9a98] px-[3px] font-bold text-white">رسوماتي
                <svg viewBox="0 0 14 8" className="h-2 w-3.5" fill="none" stroke="currentColor" strokeWidth="1.300"><path d="M1 6l4-3 3 3 5-5" /></svg>
              </button>
              <p className="flex h-[12px] items-center justify-center border border-[#bdbcc1] bg-white text-[#df7a3a]">البيانات متأخره</p>
            </div>
          </div>
          <div className="absolute top-[430px] left-3 flex items-center gap-0.5 font-['Open_Sans',sans-serif] text-[8px] leading-3 text-[#26262a]">
            <span className="mr-1.5">Volume</span>
            <button aria-label="إظهار" className="flex size-3 items-center justify-center bg-[#c3c2c6] text-white"><Eye size={9} strokeWidth={2.600} /></button>
            <button aria-label="ضبط" className="flex size-3 items-center justify-center bg-[#c3c2c6] text-white"><Settings size={9} strokeWidth={3} /></button>
            <button aria-label="إزالة" className="flex size-3 items-center justify-center bg-[#c3c2c6] text-white"><X size={10} strokeWidth={3} /></button>
            <span className="ml-2.5">19,449,908.000</span>
          </div>
          <div className="absolute top-[430px] right-[59px] flex gap-0.5">
            <button aria-label="توسيع" className="flex size-3 items-center justify-center bg-[#c3c2c6]"><span className="size-1.5 border border-white" /></button>
            <button aria-label="خيارات الحجم" className="flex size-3 items-center justify-center bg-[#b5b4b9] text-white"><Ellipsis size={9} strokeWidth={3} /></button>
          </div>
        </div>
        <div className="flex w-8 shrink-0 flex-col items-center border-l border-[#b3b2b5] bg-[#f3f4ef] text-[#47474a]">
          <Dots />
          <div className="flex flex-col pl-1.5">{TOOLS_A.map(toolItem)}</div>
          <Dots />
          {TOOLS_B.map(toolItem)}
          <Dots />
          {TOOLS_C.map(toolItem)}
        </div>
      </div>
    </Panel>
  );
}

const STOCKS: [string, string][] = [
  ['4263', 'سال'], ['TDAI', 'السلع طويلة الاجل'], ['1213', 'نسيج'], ['2130', 'صدق'], ['2340', 'ارتيكس'], ['4011', 'لازوردي'],
  ['4012', 'الأصيل'], ['4180', 'مجموعة فتيحي'], ['TCSI', 'الخدمات الاستهلاكية'], ['1810', 'سيرا'], ['1820', 'بان'],
  ['1830', 'لجام للرياضة'], ['4170', 'شمس'], ['4290', 'الخليج للتدريب'], ['4291', 'الوطنية للتعليم'], ['4292', 'عطاء'],
  ['6002', 'هرفي للأغذية'], ['6012', 'ريدان'], ['6013', 'التطويرية الغذائية'], ['6014', 'الآمار'],
  ['6015', 'أمريكانا (شركة أجنبية)'], ['6016', 'برغرايززر'], ['6017', 'جاهز'], ['TMDI', 'الإعلام والترفيه'],
  ['4070', 'تهامة'], ['4071', 'العربية'], ['4072', 'مجموعة إم بي سي'], ['4210', 'الأبحاث والإعلام'],
];

const rowTone = (code: string, i: number) => {
  if (code.startsWith('T')) return 'bg-[#cfc9e1]';
  if (code === '6015') return 'bg-[#fdf1c9]';
  return i % 2 === 0 ? 'bg-[#e7e6e9]' : 'bg-white';
};

function WatchPanel() {
  return (
    <Panel title="السعودية - الرئيسي و نمو" className="w-[214px] shrink-0">
      <div className="flex h-[26px] shrink-0 items-center border-b border-[#c5c4c7] bg-[#f5f6f2] pr-2 pl-2 font-['DejaVu_Sans',sans-serif] text-[11px] whitespace-nowrap text-[#2f2e33]">
        <form className="flex h-5 w-[42px] shrink-0 overflow-hidden rounded border border-[#8f8e92] bg-white">
          <input aria-label="بحث في القائمة" className="w-4 outline-none" />
          <button type="button" aria-label="ابحث في القائمة" className="flex flex-1 items-center justify-center border-l border-[#8f8e92]"><Loupe /></button>
        </form>
        <span className="ml-2 flex"><Sep /></span>
        <button className="ml-auto flex items-center gap-[3px]">
          <span dir="rtl">السعودية - الرئيسي و نمو</span>
          <svg viewBox="0 0 14 14" className="size-3.5" fill="none" stroke="currentColor"><rect x="1" y="1" width="12" height="12" rx="1" strokeWidth="1.700" /><path d="M1 4h12" strokeWidth="2.500" /><path d="M10 6v6" /></svg>
        </button>
      </div>
      <div className="flex min-h-0 flex-1 overflow-hidden">
        <div className="flex w-[13px] shrink-0 flex-col items-center border-r border-[#cfced2] bg-[#fafafa] pt-[25px] pb-1">
          <span className="border-x-4 border-b-[6px] border-x-transparent border-b-[#77767a]" />
          <span className="mt-[111px] h-[34px] w-2 rounded-full bg-[#858488]" />
          <span className="mt-auto border-x-4 border-t-[6px] border-x-transparent border-t-[#77767a]" />
        </div>
        <table dir="rtl" className="h-[558px] flex-1 table-fixed border-collapse">
          <thead>
            <tr className="h-[21px] bg-linear-to-b from-white to-[#fdf0e2] font-['DejaVu_Sans',sans-serif] text-[11px] leading-4 text-[#2f2e33]">
              <th className="w-[65px] border-b border-l border-[#c9c8cc] p-0 pr-1 text-right font-normal">الرمز</th>
              <th className="border-b border-[#c9c8cc] p-0 pr-1 text-right font-normal">الاسم</th>
            </tr>
          </thead>
          <tbody>
            {STOCKS.map(([code, name], i) => (
              <tr key={code} className={`border-b border-[#c3c2c6] ${rowTone(code, i)}`}>
                <td className="border-l border-[#c3c2c6] p-0 pr-0.5 font-['Liberation_Sans',sans-serif] text-[11px] leading-4 font-bold text-[#1f1e22]">
                  <span className="flex gap-[3px]"><span>{code}</span><span className="text-[9px] leading-[14px] text-[#f0a14a]">D</span></span>
                </td>
                <td className="p-0 pr-0.5 text-right font-['DejaVu_Sans',sans-serif] text-[11px] leading-4 whitespace-nowrap text-[#2f2e33]">{name}</td>
              </tr>
            ))}
          </tbody>
        </table>
      </div>
    </Panel>
  );
}

const Side = ({ children }: Kids) => (
  <svg viewBox="0 0 20 20" className="size-5" fill="none" stroke="currentColor" strokeWidth="1.500" strokeLinejoin="round">{children}</svg>
);
const SIDE: [string, React.ReactNode][] = [
  ['نافذة', <Side><rect x="1.500" y="1.500" width="17" height="17" rx="1" /><path d="M2 4.200h16" strokeWidth="2.600" /><path d="M5.500 6v12" /></Side>],
  ['تقرير', <Side><path d="M3 11V2h11.500l4 4v12.500H12" /><path d="M14 2v4.500h4.500" /><circle cx="9" cy="11" r="3.600" /><path d="M6.500 13.500L3 17" strokeWidth="2" /></Side>],
  ['مراقبة', <Side><path d="M1 10Q6 4.500 11 5t8 5.500Q17 18 11 18t-8-4" /><circle cx="11" cy="11.500" r="4" /><circle cx="11" cy="11.500" r="1.500" /><path d="M2 6l2 2M5 3.500l1.500 2M9 2v2.500M13 2.500l-.5 2M17 4.500L15.500 6M19.500 8l-2 1" /></Side>],
  ['لمس', <Side><path d="M6 12.500H1.500v-11h16V8" /><path d="M1.500 4h16" /><path d="M10 14V6.500q1.500-1.500 2.500 0V10l5 1.500q1.500 1 1 3.500l-1.500 4h-6L8 14q1-1.500 2 0z" /></Side>],
  ['أسهم', <Side><path d="M4 6h4L6 3l7-2 2 6-2-1-1 3 5 1 2 5-4 3-1-3-3 1-2-3-3 2" /><path d="M1.500 11L8 6" /></Side>],
  ['هدف', <Side><circle cx="10" cy="10" r="7.300" /><circle cx="10" cy="10" r="3" /><path d="M10 0v8M10 12v8M0 10h8M12 10h8" /></Side>],
  ['أعمدة', <Side><path d="M1.500 18V1.500h3.700V18M5.200 18v-5.500h4V18M9.200 18V4.500h4.400V18M13.600 18V7.500h4.400V18H9" /></Side>],
  ['تميز', <Side><circle cx="11" cy="8" r="6.500" /><path d="M11 4.500l1 2.300 2.400.2-1.800 1.600.6 2.400L11 9.700 8.800 11l.6-2.400L7.600 7l2.400-.2z" fill="currentColor" strokeWidth=".5" /><path d="M14 14l1.500 4 1-2.500 2.500-.5-3-3M7 14l-2 4" /></Side>],
  ['صعود', <Side><path d="M5 13l2.500-2 2.500 2 6-7" strokeWidth="3" /><path d="M12.500 3.500L19 2l-.5 7z" fill="currentColor" strokeWidth=".5" /></Side>],
  ['سجل', <Side><path d="M7 5l-1-3.500L1 6.500 7 10V7q7-3 8 3 0 6-7 5l-1 2.500q9 2 11-5 1-7-6-8.500-2.500-.5-5 1z" /><path d="M10 8.500v4h3" strokeWidth="1.800" /></Side>],
];

function SideBar() {
  const label = "flex h-[25px] shrink-0 items-center justify-center border-b border-[#8f8e92] font-['DejaVu_Sans',sans-serif] text-[8px] font-bold text-[#2f2e33]";
  return (
    <aside className="flex w-[33px] shrink-0 flex-col overflow-hidden bg-[#cdcacf]">
      <button className={`${label} bg-white`}>سوق</button>
      <div className="grid h-[376px] shrink-0 grid-rows-10">
        {SIDE.map(([name, icon]) => (
          <button key={name} aria-label={name} className="relative flex items-start justify-center border-b border-[#c5c4c8] bg-[#f0eff3] pt-[7px] text-[#b3b2b7]">
            {icon}
            <svg viewBox="0 0 10 12" className="absolute bottom-[5px] left-[5px] h-3 w-2.5"><path d="M2.500 6V3.500a2.500 2.500 0 0 1 5 0V6" fill="none" stroke="#1273be" strokeWidth="1.500" /><rect y="5" width="10" height="7" fill="#1273be" /><circle cx="5" cy="8.500" r="1" fill="#fff" /></svg>
          </button>
        ))}
      </div>
      <button className={`${label} bg-[#ecebee]`}>شركات</button>
      <button className={`${label} bg-[#ecebee]`}>المجتمع</button>
      <button className={`${label} bg-[#fdf6c8]`}>أدوات</button>
    </aside>
  );
}

function BottomBar() {
  const sep = 'h-[22px] border-l-2 border-dotted border-[#858488]';
  return (
    <footer className="flex h-[29px] shrink-0 items-start bg-[#cdcacf] font-['DejaVu_Sans',sans-serif]">
      <div className="flex h-full items-center pt-px pl-2">
        <button className="flex h-[23px] items-center gap-1 rounded bg-[#4389c9] px-1.5 text-[10px] whitespace-nowrap text-white"><span dir="rtl">تسجيل الدخول</span><LogOut size={11} strokeWidth={3.200} className="-scale-x-100" /></button>
        <span className={`ml-[6px] ${sep}`} />
        <button aria-label="ملء الشاشة" className="ml-3 text-[#2f2e33]"><svg viewBox="0 0 20 20" className="size-5" fill="none" stroke="currentColor" strokeWidth="2.600"><path d="M2 7V2h5M13 2h5v5M18 13v5h-5M7 18H2v-5" /></svg></button>
        <span className={`ml-[11px] ${sep}`} />
        <button aria-label="حجم الخط" className="ml-[13px] flex items-center text-[#2f2e33]"><svg viewBox="0 0 8 14" className="h-3.5 w-2"><path d="M2.500 14V6H0l4-5 4 5H5.500v8z" fill="currentColor" /></svg><span className="font-['Liberation_Sans',sans-serif] text-[18px] leading-none font-bold">A</span></button>
        <span className={`ml-2.5 ${sep}`} />
      </div>
      <div className="mr-[41px] ml-auto flex items-start gap-2 text-[10px] font-bold whitespace-nowrap">
        <button aria-label="إضافة صفحة" className="flex h-[25px] w-[30px] items-center justify-center rounded-b-md bg-[#8a68ce]"><span className="flex size-3.5 items-center justify-center rounded-full bg-white text-[#8a68ce]"><Plus size={10} strokeWidth={3.500} /></span></button>
        <button dir="rtl" className="h-[25px] w-[101px] rounded-b-lg border border-t-0 border-[#a19fa6] bg-[#e4e0f8] text-[#8b8992]">متابع السوق</button>
        <button dir="rtl" className="h-[25px] w-[100px] rounded-b-lg border border-t-0 border-[#a19fa6] bg-white text-black">الرسم البياني</button>
      </div>
    </footer>
  );
}

export default function App() {
  return (
    <div className="flex h-screen min-h-[600px] flex-col overflow-hidden bg-black px-px pt-[27px] pb-7">
      <BrowserChrome />
      <MarketStrip />
      <div className="flex min-h-0 flex-1 bg-[#f4f3f5]">
        <main className="flex min-w-0 flex-1 gap-[3px] pt-[3px] pr-[3px] pb-0.5 pl-[3px]">
          <ChartPanel />
          <WatchPanel />
        </main>
        <SideBar />
      </div>
      <BottomBar />
    </div>
  );
}
